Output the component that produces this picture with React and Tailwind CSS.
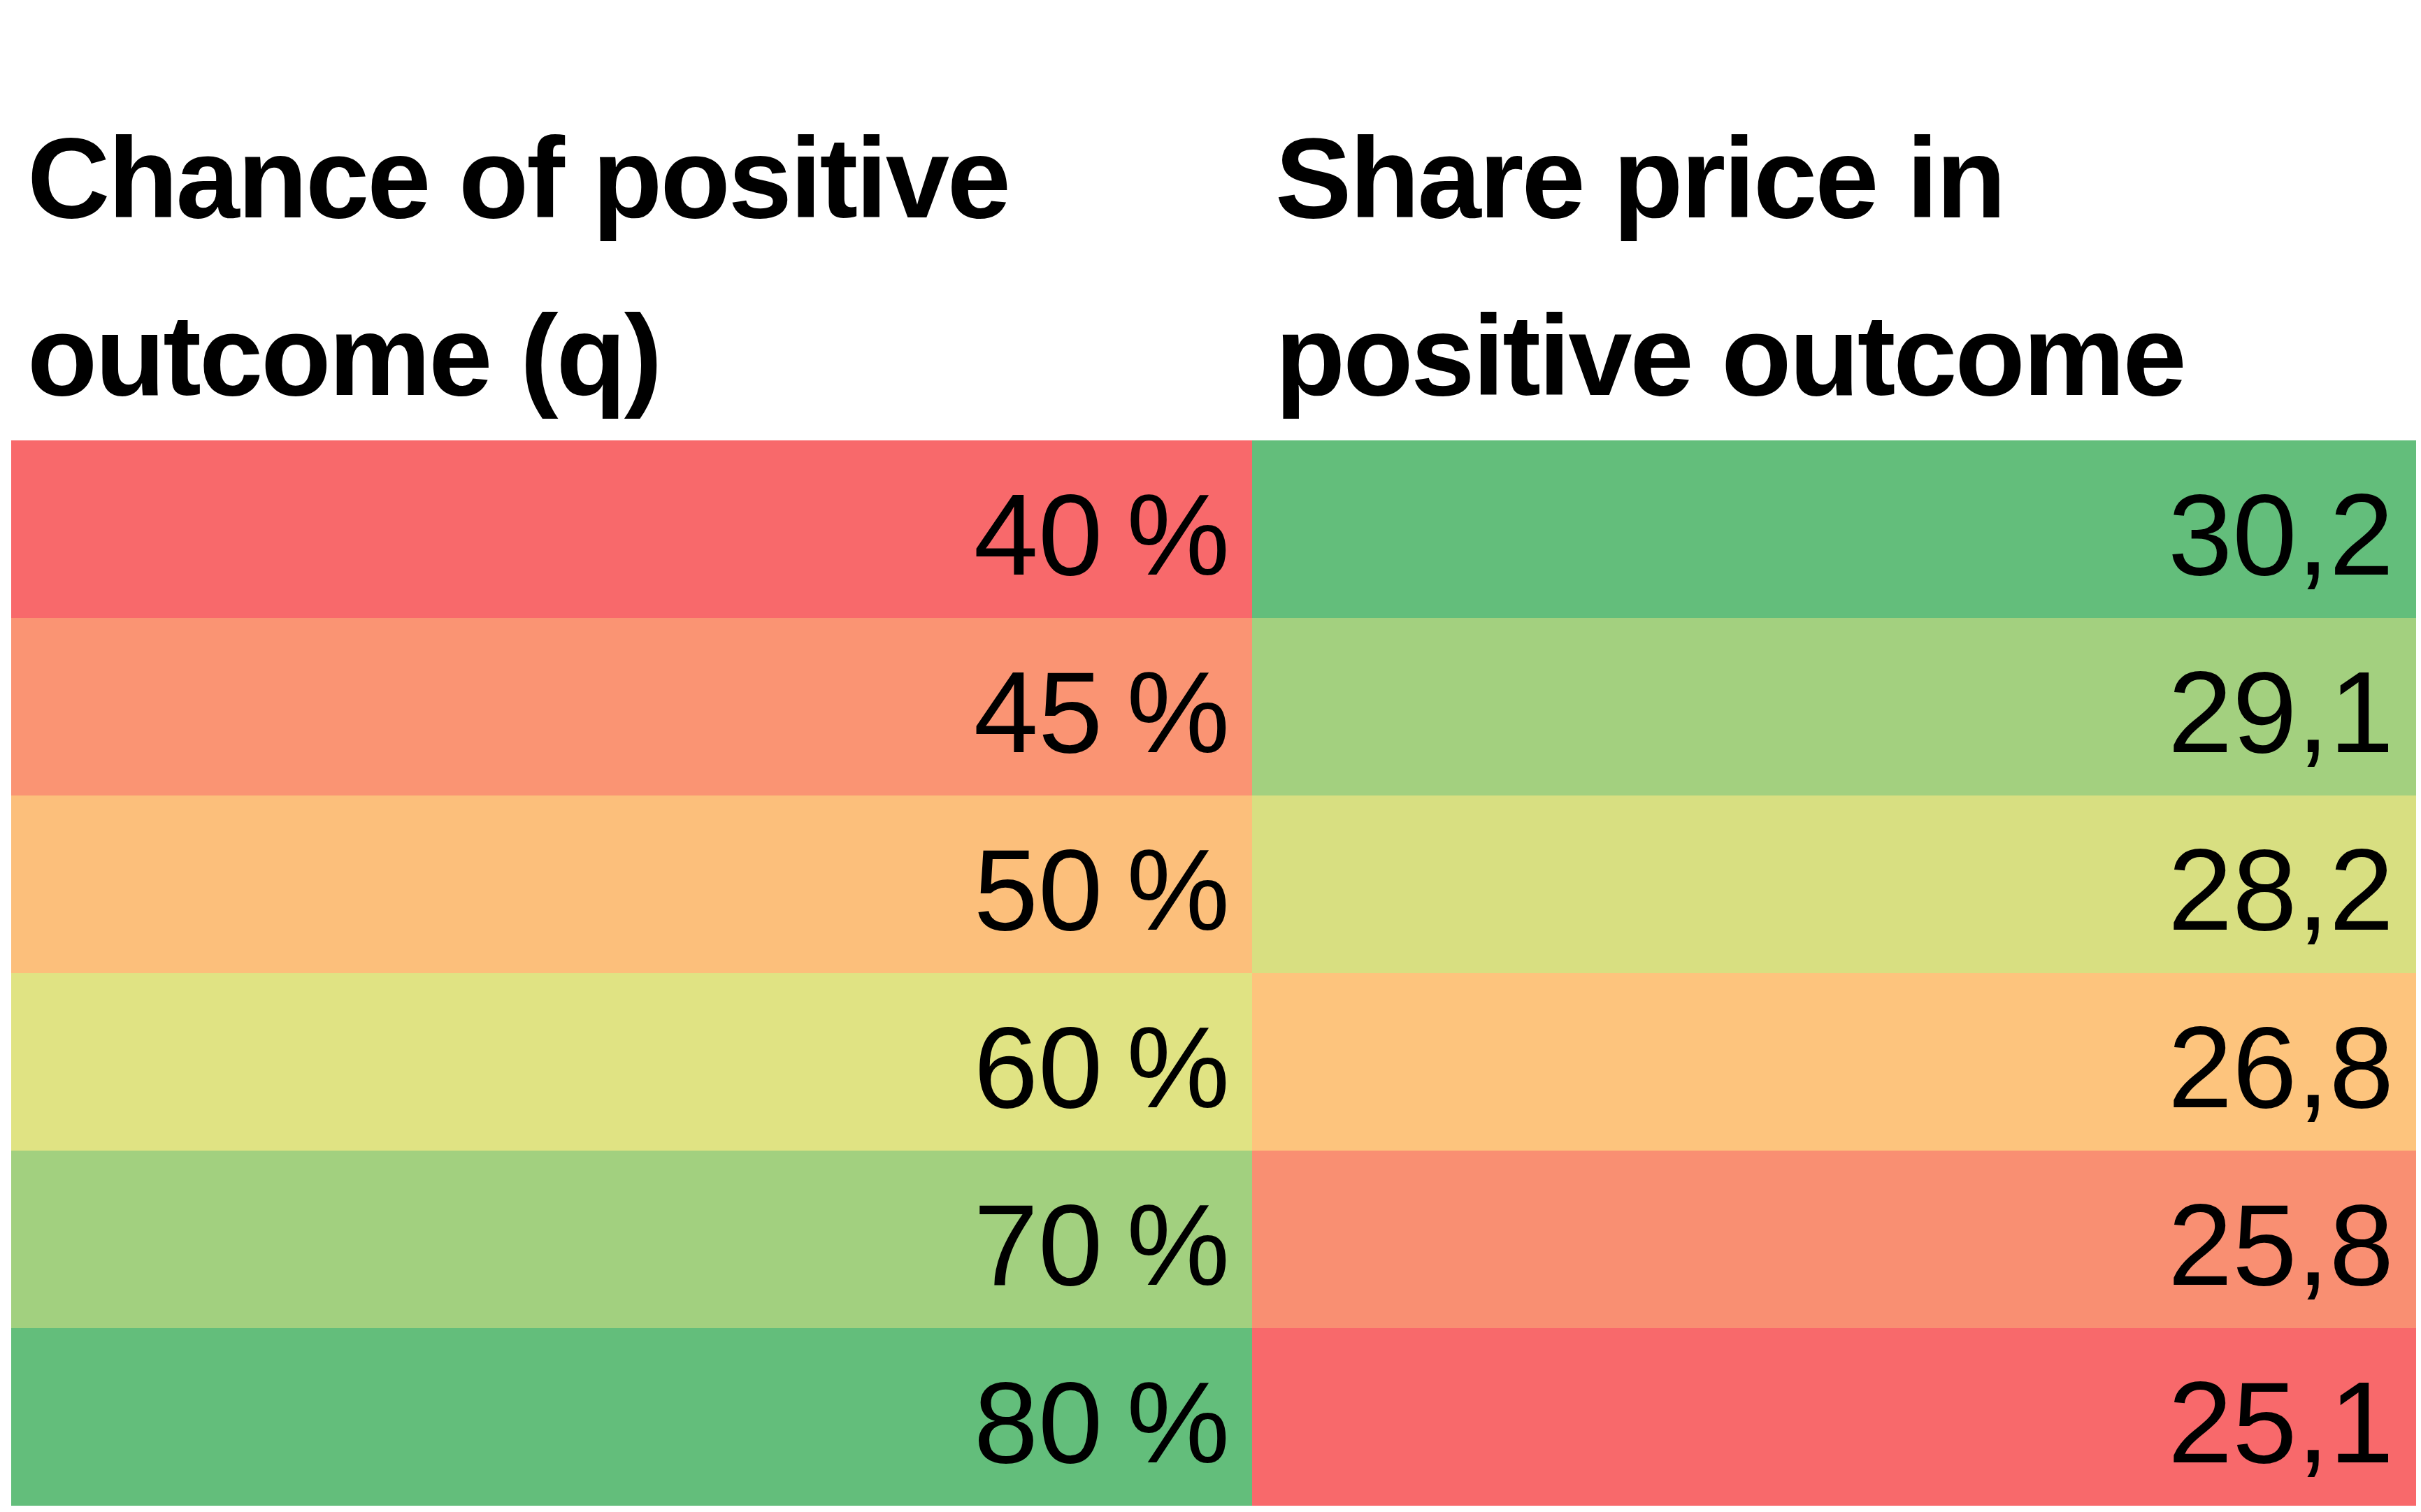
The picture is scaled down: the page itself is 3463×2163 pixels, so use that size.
const rows = [
  { q: "40 %", qBg: "bg-[#F8696B]", price: "30,2", pBg: "bg-[#63BE7B]" },
  { q: "45 %", qBg: "bg-[#FA9473]", price: "29,1", pBg: "bg-[#A3D07F]" },
  { q: "50 %", qBg: "bg-[#FCBF7B]", price: "28,2", pBg: "bg-[#D8DF81]" },
  { q: "60 %", qBg: "bg-[#E0E383]", price: "26,8", pBg: "bg-[#FDC47D]" },
  { q: "70 %", qBg: "bg-[#A2D07F]", price: "25,8", pBg: "bg-[#F98F72]" },
  { q: "80 %", qBg: "bg-[#63BE7B]", price: "25,1", pBg: "bg-[#F8696B]" },
];

const Cell = ({ value, bg }) => (
  <div className={`h-[254px] flex items-end justify-end pr-[32px] pb-[36px] ${bg}`}>
    <span className="text-[166px] leading-none text-black [word-spacing:-12px]">{value}</span>
  </div>
);

export default function App() {
  return (
    <div className="min-h-screen bg-white pl-[16px] pt-[128px] font-['Liberation_Sans',Arial,sans-serif]">
      <div className="grid grid-cols-[1775px_1665px] h-[502px] text-[164px] leading-[254px] font-bold tracking-[-3px] text-black">
        <div className="pl-[23px]">
          Chance of positive
          <br />
          outcome (q)
        </div>
        <div className="pl-[33px]">
          Share price in
          <br />
          positive outcome
        </div>
      </div>
      <div className="grid grid-cols-[1775px_1665px]">
        {rows.map((r) => (
          <div key={r.q} className="contents">
            <Cell value={r.q} bg={r.qBg} />
            <Cell value={r.price} bg={r.pBg} />
          </div>
        ))}
      </div>
    </div>
  );
}
